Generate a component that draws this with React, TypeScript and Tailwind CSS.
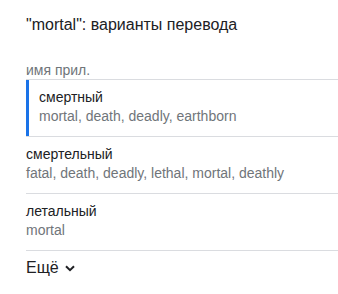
import React from 'react';

const translations = [
  { word: 'смертный', back: 'mortal, death, deadly, earthborn', active: true },
  { word: 'смертельный', back: 'fatal, death, deadly, lethal, mortal, deathly', active: false },
  { word: 'летальный', back: 'mortal', active: false },
];

const App = () => {
  return (
    <div
      className="min-h-screen bg-white pl-[26px] pt-[13px] text-[#202124]"
      style={{ fontFamily: '"Liberation Sans", Arial, sans-serif' }}
    >
      {/* Title */}
      <h2 className="text-[16px] leading-[24px] font-normal">"mortal": варианты перевода</h2>

      {/* Part of speech */}
      <div className="mt-[24px] text-[14px] leading-[18px] text-[#70757a]">имя прил.</div>

      {/* Translation rows */}
      <div className="border-t border-[#dadce0]">
        {translations.map((t) => (
          <div key={t.word} className="border-b border-[#dadce0]">
            <div
              className={
                t.active
                  ? 'border-l-[3px] border-[#1a73e8] pl-[10px] pt-[8px] pb-[10px]'
                  : 'pt-[8px] pb-[10px]'
              }
            >
              <div className="text-[14px] leading-[19px] text-[#202124]">{t.word}</div>
              <div className="text-[14px] leading-[19px] text-[#70757a]">{t.back}</div>
            </div>
          </div>
        ))}
      </div>

      {/* More */}
      <button className="mt-[5px] flex items-center gap-[6px] text-[16px] leading-[24px] text-[#202124]">
        <span>Ещё</span>
        <svg width="10" height="7" viewBox="0 0 10 7" fill="none">
          <path d="M1 1.2l4 4 4-4" stroke="#202124" strokeWidth="2" />
        </svg>
      </button>
    </div>
  );
};

export default App;
